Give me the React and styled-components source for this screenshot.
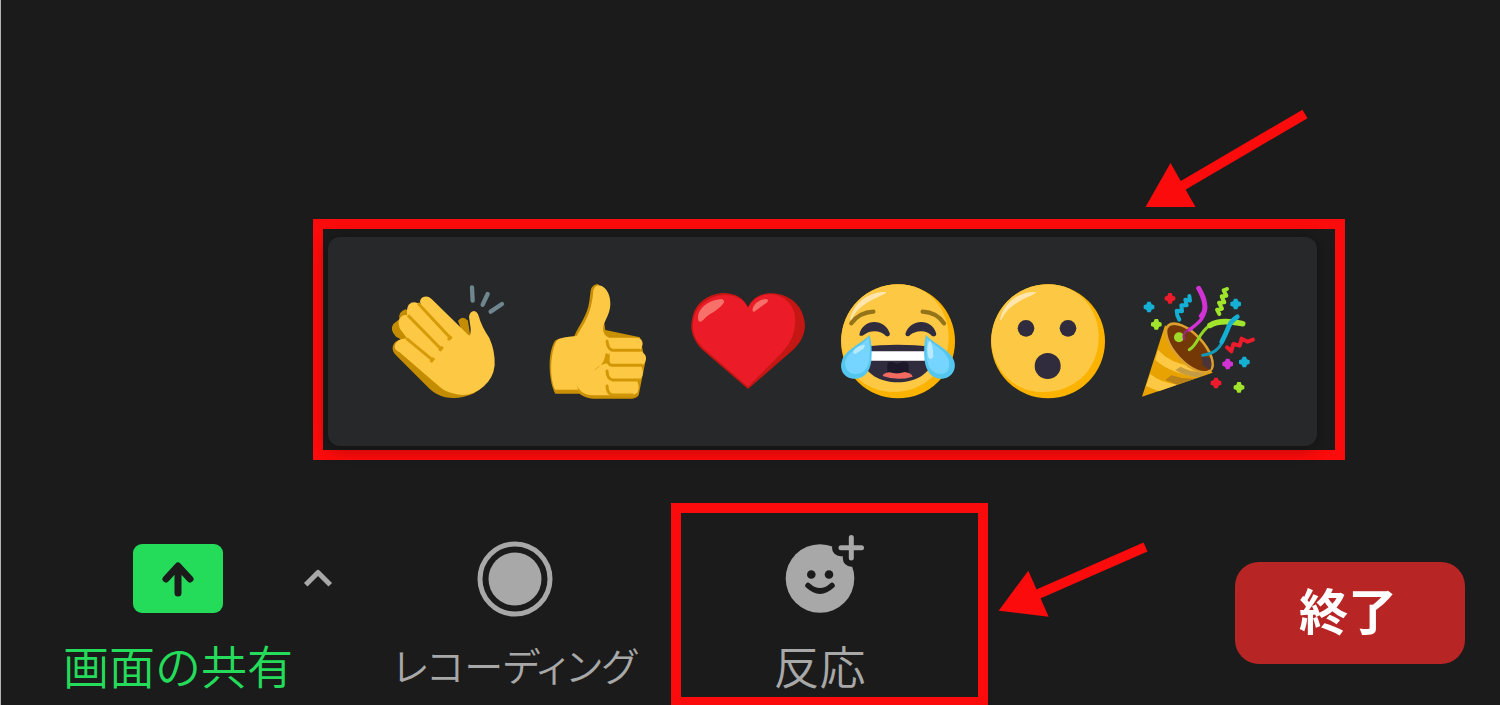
import React from "react";
import styled, { createGlobalStyle, css } from "styled-components";

const color = {
  page: "#1b1b1b",
  panel: "#262829",
  mark: "#fb0b0b",
  grey: "#a8a8a8",
  green: "#24db5a",
  end: "#b72625",
};

const GlobalStyle = createGlobalStyle`
  * { box-sizing: border-box; }
  body {
    margin: 0;
    background: ${color.page};
    font-family: "Noto Sans CJK JP", "Noto Sans", sans-serif;
  }
`;

const Page = styled.main`
  display: flex;
  flex-direction: column;
  min-height: 100vh;
  padding-top: 219px;
  border-left: 1px solid #b4b4b4;
  background: ${color.page};
  overflow: hidden;
`;

const highlight = css`
  position: relative;
  border: 10px solid ${color.mark};
`;

const PanelHighlight = styled.section`
  ${highlight}
  align-self: flex-end;
  margin-right: 155px;
  padding: 8px 18px 4px 5px;
`;

const ReactionPanel = styled.div`
  display: flex;
  gap: 10px;
  padding: 33px 47px 36px 52px;
  border-radius: 12px;
  background: ${color.panel};
  box-shadow: 0 2px 16px rgba(0, 0, 0, 0.35);
`;

const PlainButton = styled.button`
  padding: 0;
  border: 0;
  background: none;
  color: inherit;
  font: inherit;
  cursor: pointer;
`;

const EmojiButton = styled(PlainButton)`
  width: 140px;
  height: 140px;
`;

const EmojiArt = styled.svg`
  display: block;
  width: 100%;
  height: 100%;
`;

const Toolbar = styled.footer`
  display: flex;
  align-items: flex-start;
  margin-top: 43px;
  padding: 0 35px 0 56px;
`;

const ToolButton = styled(PlainButton)`
  display: flex;
  flex-direction: column;
  align-items: center;
  gap: 17px;
  width: ${(p) => p.$width || "auto"};
  color: ${(p) => p.$color || color.grey};
`;

const ToolSlot = styled.div`
  display: flex;
  padding: 31px 0 14px;
  margin-left: ${(p) => p.$before || "0"};
`;

const ToolIcon = styled.svg`
  display: block;
  width: 90px;
  height: 86px;
`;

const ToolLabel = styled.span`
  font-size: ${(p) => (p.$kana ? "39px" : "46px")};
  font-weight: 350;
  line-height: 54px;
  white-space: nowrap;
  font-feature-settings: ${(p) => (p.$kana ? '"palt"' : "normal")};
`;

const MenuToggle = styled(PlainButton)`
  width: 38px;
  height: 86px;
`;

const ToolHighlight = styled.div`
  ${highlight}
  display: flex;
  justify-content: center;
  width: 317px;
  margin-left: 21px;
  padding: 21px 20px 6px 0;
  border-bottom-width: 8px;
`;

const EndButton = styled.button`
  width: 230px;
  height: 102px;
  margin: 59px 0 0 auto;
  padding: 0 4px 8px 0;
  border: 0;
  border-radius: 24px;
  background: ${color.end};
  color: #fff;
  font-family: inherit;
  font-size: 49px;
  font-weight: 700;
  line-height: 54px;
  cursor: pointer;
`;

const PanelArrow = styled.svg`
  position: absolute;
  top: -124px;
  right: 23px;
  width: 172px;
  height: 107px;
`;

const ToolArrow = styled.svg`
  position: absolute;
  top: 27px;
  left: calc(100% + 17px);
  width: 160px;
  height: 80px;
`;

function Clap() {
  return (
    <EmojiArt viewBox="0 0 420 420" aria-hidden="true">
      <path d="M234 152Q248 134 264 152L272 206L250 196Z" fill="#c48c00" />
      <path d="M38 230Q42 214 62 208L48 200Q28 180 40 162L58 148Q54 126 76 118L330 250Q350 330 282 370Q240 390 196 382Q170 376 150 358L48 256Q36 244 38 230Z" fill="#c48c00" />
      <path d="M44 232Q44 220 54 212Q68 204 82 206L60 176Q50 156 62 142Q70 132 82 136Q78 118 86 104Q98 92 114 100L122 104Q116 90 128 82Q142 76 154 86L262 192Q272 206 272 176L267 140Q270 124 282 123Q292 124 296 138Q304 168 328 204Q346 244 344 286Q340 326 310 350Q268 386 218 370Q196 366 176 348L58 246Q46 242 44 232Z" fill="#fdc843" />
      <g fill="none" stroke="#d59b09" strokeWidth="9">
        <path d="M114 100L214 207M84 136L186 240M80 206L160 272" />
        <path d="M152 276L162 264M178 242L188 230M204 210L214 199" />
      </g>
      <g fill="none" stroke="#6f868f" strokeWidth="13" strokeLinecap="round">
        <path d="M276 52L278 92M323 72L308 104M366 102L332 125" />
      </g>
    </EmojiArt>
  );
}

function ThumbsUp() {
  return (
    <EmojiArt viewBox="0 0 420 420" aria-hidden="true">
      <path d="M132 200C150 160 172 138 178 94L182 62Q186 42 205 42L226 180L330 202L346 276L326 376Q318 387 300 386L190 386Q166 384 148 371L76 371C58 342 50 254 74 214Q80 203 132 200Z" fill="#c98f05" />
      <path d="M140 198C164 158 178 138 186 94Q190 70 190 60Q196 46 207 46C230 50 242 76 241 104C240 136 218 158 219 178Q221 198 238 203L322 203Q338 206 338 222Q336 236 330 242Q350 252 348 268Q346 282 334 289Q344 308 334 324L322 334Q330 352 322 368Q314 376 300 376L190 376Q164 376 146 359L76 359C58 330 60 246 80 212Q88 202 140 198Z" fill="#fdc843" />
      <g fill="none" stroke="#d29707" strokeWidth="9" strokeLinecap="round">
        <path d="M231 214Q234 238 248 241L328 241M230 254Q230 284 246 286L336 286M231 303Q232 328 248 330L328 330M231 348Q232 373 248 375L308 375" />
      </g>
      <path d="M190 302Q220 286 225 260L239 250L239 280Q216 278 190 302ZM140 340Q142 360 166 373L146 368Z" fill="#d29707" />
    </EmojiArt>
  );
}

function Heart() {
  return (
    <EmojiArt viewBox="0 0 420 420" aria-hidden="true">
      <path d="M204 357L68 240C38 210 28 178 37 144C52 60 174 42 204 112C234 42 356 62 372 146C382 184 364 216 338 241Z" fill="#c41714" />
      <path d="M204 350L72 236C42 208 34 178 41 146C58 68 176 50 204 114C232 52 328 62 344 132C352 184 330 222 304 250Z" fill="#eb1c27" />
      <path d="M56 154C46 126 76 90 126 87Q136 92 130 100C118 120 84 132 69 151Q62 158 56 154ZM218 124C214 108 236 86 260 87Q268 91 260 98L223 125Z" fill="#f77069" />
    </EmojiArt>
  );
}

function FaceBase() {
  return (
    <>
      <circle cx="210" cy="214" r="171" fill="#fbb300" />
      <path d="M210 43C306 43 362 122 362 200C362 302 286 366 196 366C108 366 43 300 40 214C40 118 116 43 210 43Z" fill="#fdc843" />
      <path d="M66 148C78 96 124 64 174 66C182 74 94 92 72 147Q68 152 66 148Z" fill="#ffe5ae" />
    </>
  );
}

function Joy() {
  return (
    <EmojiArt viewBox="6 0 420 420" aria-hidden="true">
      <FaceBase />
      <g fill="none" stroke="#947319" strokeWidth="13" strokeLinecap="round">
        <path d="M70 160Q94 127 136 125M284 125Q326 127 348 160" />
      </g>
      <path d="M94 194C104 144 172 144 186 192Q184 202 174 198C158 178 122 180 106 196Q96 200 94 194ZM232 192C246 144 314 144 325 192Q324 202 312 198C298 178 260 180 244 197Q234 202 232 192Z" fill="#302b3d" />
      <path d="M102 230Q210 218 314 230V266C304 360 114 360 104 266Z" fill="#302b3d" />
      <path d="M116 244H302V266Q302 272 292 272H126Q116 272 116 266Z" fill="#fff" />
      <path d="M178 284Q178 275 190 275L207 281L226 275Q242 275 242 286V310H178Z" fill="#1c1829" />
      <path d="M164 318Q166 309 184 307Q208 314 230 306Q252 309 254 320Q208 334 164 318Z" fill="#f26a60" />
      <path d="M124 195C132 220 132 246 130 272C126 306 108 326 80 326C50 326 32 300 42 272C52 238 100 222 124 195ZM294 195C318 222 366 238 378 272C388 300 368 326 340 326C310 326 294 302 290 272C287 246 288 220 294 195Z" fill="#55c7ef" />
      <path d="M122 202C127 230 126 254 124 272C118 298 104 312 80 312C60 310 48 292 52 272C62 244 102 226 122 202ZM296 204C316 226 352 240 362 270C368 294 358 312 338 312C310 310 298 288 296 260Z" fill="#75d5ff" />
      <path d="M76 250Q74 232 107 224Q114 226 106 236L82 252ZM302 264Q292 232 305 211Q316 222 316 260Q310 272 302 264Z" fill="#b7e9ff" />
    </EmojiArt>
  );
}

function OpenMouth() {
  return (
    <EmojiArt viewBox="6 0 420 420" aria-hidden="true">
      <FaceBase />
      <g fill="#302b3d">
        <circle cx="144" cy="175" r="25" />
        <circle cx="270" cy="175" r="25" />
        <circle cx="209" cy="288" r="39" />
      </g>
    </EmojiArt>
  );
}

const confetti = [
  [57, 111, "#14afd3"],
  [120, 85, "#ed1c2c"],
  [79, 163, "#a0e52c"],
  [317, 102, "#14afd3"],
  [343, 276, "#14afd3"],
  [293, 282, "#d231d4"],
  [258, 339, "#ed1c2c"],
  [327, 352, "#a0e52c"],
];

function Party() {
  return (
    <EmojiArt viewBox="0 0 420 420" aria-hidden="true">
      <path d="M105 166L36 380L248 308L180 230Z" fill="#e8a302" />
      <path d="M84 240Q120 280 184 288L237 296L206 322Q120 310 76 270ZM61 312Q88 336 142 344L86 364L48 348Z" fill="#fdc843" />
      <path d="M124 316Q164 330 202 324L142 344L106 330Z" fill="#b98118" />
      <path d="M152 290Q196 314 246 302L204 322Q170 322 136 300Z" fill="#c69c43" />
      <ellipse cx="178" cy="234" rx="92" ry="42" transform="rotate(47 178 234)" fill="#733805" stroke="#dda02c" strokeWidth="8" />
      <path d="M215 260L241 264Q248 288 240 300L218 286Z" fill="#49343a" />
      <circle cx="147" cy="202" r="15" fill="#9edb29" />
      <g fill="none" strokeLinecap="round" strokeLinejoin="round">
        <path d="M162 208C158 188 166 186 182 174" stroke="#9b267d" strokeWidth="7" />
        <path d="M178 180C206 158 230 142 224 106Q222 80 206 55" stroke="#d231d4" strokeWidth="10" />
        <path d="M214 138Q228 124 224 102Q221 80 206 55" stroke="#d231d4" strokeWidth="15" />
        <path d="M178 239C204 224 204 190 240 166" stroke="#92d626" strokeWidth="9" />
        <path d="M240 166C270 148 310 156 338 161" stroke="#a0e52c" strokeWidth="17" />
        <path d="M218 256C270 250 278 216 292 180" stroke="#1598b7" strokeWidth="9" />
        <path d="M275 216Q286 194 292 180Q300 154 322 140" stroke="#14afd3" strokeWidth="14" />
        <path d="M148 149Q140 136 140 122L156 124L154 106L170 106L166 89L180 92L178 78" stroke="#14afd3" strokeWidth="12" />
        <path d="M268 132L261 119L276 116L267 98L283 97L275 79L289 77L281 61L291 57" stroke="#a0e52c" strokeWidth="12" />
        <path d="M291 232L304 244L310 222L329 227L335 206L353 215L369 209" stroke="#ed1c2c" strokeWidth="12" />
      </g>
      {confetti.map(([x, y, fill]) => (
        <path key={`${x}-${y}`} d={`M${x - 5} ${y - 16}H${x + 5}L${x + 8} ${y - 8}L${x + 16} ${y - 5}V${y + 5}L${x + 8} ${y + 8}L${x + 5} ${y + 16}H${x - 5}L${x - 8} ${y + 8}L${x - 16} ${y + 5}V${y - 5}L${x - 8} ${y - 8}Z`} fill={fill} />
      ))}
    </EmojiArt>
  );
}

const reactions = [
  { name: "拍手", Art: Clap },
  { name: "賛成", Art: ThumbsUp },
  { name: "ハート", Art: Heart },
  { name: "うれし泣き", Art: Joy },
  { name: "驚き", Art: OpenMouth },
  { name: "お祝い", Art: Party },
];

export default function App() {
  return (
    <>
      <GlobalStyle />
      <Page>
        <PanelHighlight>
          <ReactionPanel>
            {reactions.map(({ name, Art }) => (
              <EmojiButton key={name} type="button" aria-label={name}>
                <Art />
              </EmojiButton>
            ))}
          </ReactionPanel>
          <PanelArrow viewBox="1140 105 172 107" aria-hidden="true">
            <path d="M1182 186L1305 114" stroke={color.mark} strokeWidth="10" />
            <path d="M1145.5 207L1170.5 163L1195.5 207Z" fill={color.mark} />
          </PanelArrow>
        </PanelHighlight>

        <Toolbar>
          <ToolSlot>
            <ToolButton type="button" $width="242px" $color={color.green}>
              <ToolIcon viewBox="0 0 90 86" aria-hidden="true">
                <rect y="10" width="90" height="69" rx="9" fill={color.green} />
                <path d="M45 59V33M33 45L45 32L57 45" fill="none" stroke={color.page} strokeWidth="7" strokeLinecap="round" strokeLinejoin="round" />
              </ToolIcon>
              <ToolLabel>画面の共有</ToolLabel>
            </ToolButton>
          </ToolSlot>
          <ToolSlot>
            <MenuToggle type="button" aria-label="共有オプション">
              <svg width="38" height="86" viewBox="0 0 38 86" aria-hidden="true">
                <path d="M8.5 49L19 38.5L29.5 49" fill="none" stroke={color.grey} strokeWidth="5" strokeLinejoin="round" strokeLinecap="square" />
              </svg>
            </MenuToggle>
          </ToolSlot>
          <ToolSlot $before="43px">
            <ToolButton type="button" $width="270px">
              <ToolIcon viewBox="0 0 90 86" aria-hidden="true">
                <circle cx="45" cy="45" r="35" fill="none" stroke={color.grey} strokeWidth="5" />
                <circle cx="45" cy="45" r="26.5" fill={color.grey} />
              </ToolIcon>
              <ToolLabel $kana>レコーディング</ToolLabel>
            </ToolButton>
          </ToolSlot>
          <ToolHighlight>
            <ToolButton type="button">
              <ToolIcon viewBox="0 0 90 86" aria-hidden="true">
                <circle cx="45" cy="44.5" r="34.3" fill={color.grey} />
                <g strokeLinecap="round" fill="none">
                  <path d="M65.5 13.7H87M76.3 3V24.2" stroke={color.page} strokeWidth="17" />
                  <path d="M66 13.7H86.5M76.3 3.5V24" stroke={color.grey} strokeWidth="5" />
                  <path d="M33 51.5Q45 62.5 57 51.5" stroke={color.page} strokeWidth="5.5" />
                </g>
                <circle cx="36.3" cy="40.5" r="4.3" fill={color.page} />
                <circle cx="54" cy="40.5" r="4.3" fill={color.page} />
              </ToolIcon>
              <ToolLabel>反応</ToolLabel>
            </ToolButton>
            <ToolArrow viewBox="995 540 160 80" aria-hidden="true">
              <path d="M1036 595L1145.5 547" stroke={color.mark} strokeWidth="10" />
              <path d="M998.7 610.7L1028.3 570.7L1048.7 616.7Z" fill={color.mark} />
            </ToolArrow>
          </ToolHighlight>
          <EndButton type="button">終了</EndButton>
        </Toolbar>
      </Page>
    </>
  );
}
